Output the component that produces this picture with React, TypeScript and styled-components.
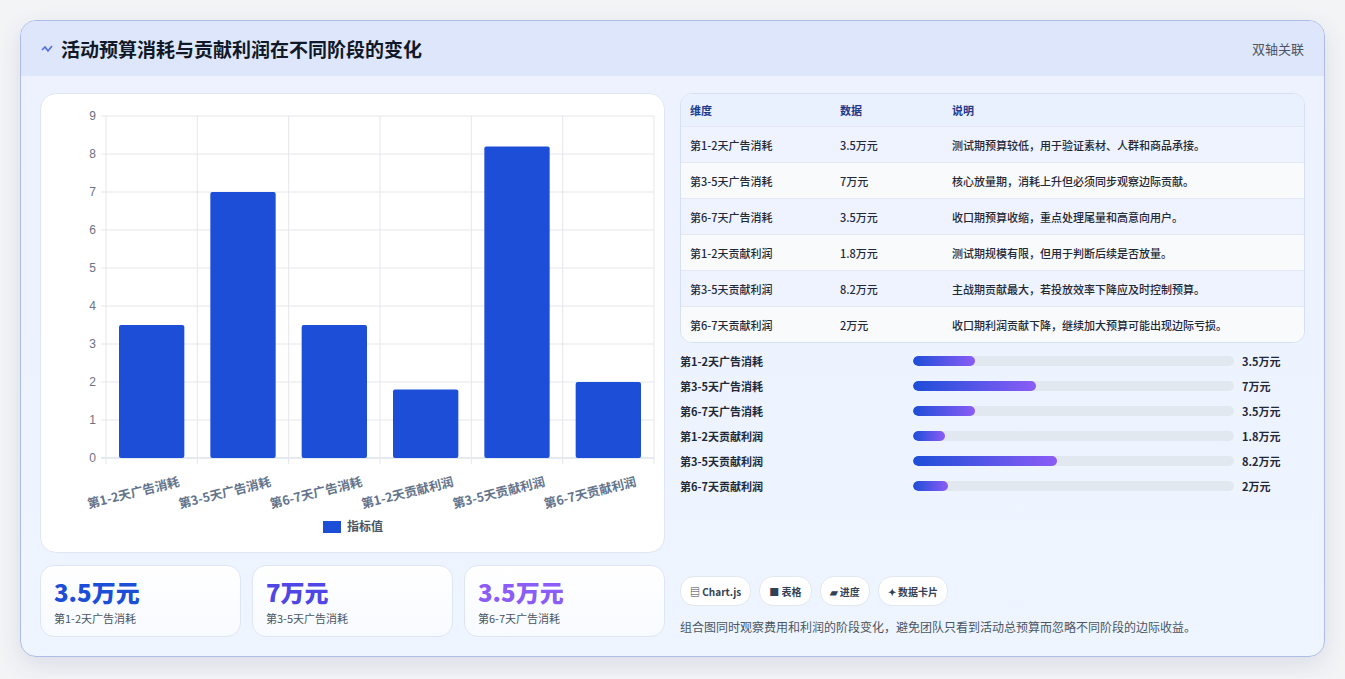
import React from "react";
import styled, { createGlobalStyle } from "styled-components";

const G = createGlobalStyle`
  body { margin:0; background:#f3f4f6; font-family: "Noto Sans CJK SC", "Noto Sans", sans-serif; }
`;
const Page = styled.div`padding:20px 20px 21px 20px;`;
const Card = styled.div`
  border:1px solid #aebde8; border-radius:16px; overflow:hidden;
  background:linear-gradient(180deg,#edf2fe,#eef5ff); box-shadow:0 8px 24px rgba(40,60,120,.12);
`;
const Header = styled.div`
  height:55px; background:#dde6fb; display:flex; align-items:center; justify-content:space-between; padding:0 20px;
`;
const Title = styled.div`font-size:19px; font-weight:700; color:#111827; display:flex; align-items:center; gap:8px;`;
const Tag = styled.div`font-size:13px; color:#4b5563;`;
const Body = styled.div`display:grid; grid-template-columns:625px 625px; gap:15px; padding:17px 19px 19px 19px;`;
const Col = styled.div`display:flex; flex-direction:column;`;
const ChartBox = styled.div`background:#fff; border:1px solid #dfe6f3; border-radius:16px; height:460px; box-sizing:border-box;`;
const Kpis = styled.div`display:grid; grid-template-columns:repeat(3,1fr); gap:11px; margin-top:12px;`;
const Kpi = styled.div`background:linear-gradient(180deg,#fff,#f7faff); border:1px solid #dfe6f3; border-radius:14px; height:72px; box-sizing:border-box; padding:10px 13px;`;
const KpiV = styled.div<{c:string}>`font-size:24px; font-weight:800; color:${p=>p.c}; line-height:32px;`;
const KpiL = styled.div`font-size:11px; color:#4b5563; margin-top:2px;`;
const Table = styled.div`border:1px solid #d6e0f0; border-radius:12px; overflow:hidden; background:#fff;`;
const Row = styled.div<{h?:boolean;alt?:boolean}>`
  display:grid; grid-template-columns:150px 112px 1fr; align-items:center; padding:0 9px;
  height:${p=>p.h?32:35}px; font-size:11px; color:#1f2937; font-weight:${p=>p.h?700:500};
  background:${p=>p.h?"#eaf1fe":p.alt?"#f8fafc":"#eef3ff"}; border-top:${p=>p.h?"none":"1px solid #e3e9f4"};
  ${p=>p.h?"color:#1e3a8a;":""}
`;
const Bars = styled.div`display:flex; flex-direction:column; gap:7px; margin-top:9px;`;
const BarRow = styled.div`display:grid; grid-template-columns:233px 321px 1fr; align-items:center; height:18px; font-size:11px; font-weight:700; color:#1f2937;`;
const Track = styled.div`height:10px; background:#e2e8f0; border-radius:5px; overflow:hidden;`;
const Fill = styled.div`height:100%; border-radius:5px; background:linear-gradient(90deg,#1d4ed8,#8b5cf6);`;
const Val = styled.div`padding-left:8px;`;
const Chips = styled.div`display:flex; gap:8px; margin-top:auto;`;
const Chip = styled.div`background:#fff; border:1px solid #e2e8f0; border-radius:14px; height:28px; padding:0 9px; display:flex; align-items:center; gap:3px; font-size:10px; font-weight:700; color:#334155;`;
const Note = styled.div`font-size:12px; color:#4b5563; margin-top:12px; margin-bottom:2px;`;

const cats=["第1-2天广告消耗","第3-5天广告消耗","第6-7天广告消耗","第1-2天贡献利润","第3-5天贡献利润","第6-7天贡献利润"];
const vals=[3.5,7,3.5,1.8,8.2,2];
const rows=[
 ["第1-2天广告消耗","3.5万元","测试期预算较低，用于验证素材、人群和商品承接。"],
 ["第3-5天广告消耗","7万元","核心放量期，消耗上升但必须同步观察边际贡献。"],
 ["第6-7天广告消耗","3.5万元","收口期预算收缩，重点处理尾量和高意向用户。"],
 ["第1-2天贡献利润","1.8万元","测试期规模有限，但用于判断后续是否放量。"],
 ["第3-5天贡献利润","8.2万元","主战期贡献最大，若投放效率下降应及时控制预算。"],
 ["第6-7天贡献利润","2万元","收口期利润贡献下降，继续加大预算可能出现边际亏损。"],
];

function Chart(){
  const x0=65,x1=613,y0=364,y9=22, u=(y0-y9)/9, w=(x1-x0)/6;
  return <svg width="625" height="460" style={{display:"block"}}>
    {Array.from({length:10},(_,i)=>{const y=y0-i*u;return <g key={i}>
      <line x1={x0-5} x2={x1} y1={y} y2={y} stroke={i===0?"#cbd5e1":"#e5e7eb"}/>
      <text x={x0-10} y={y+4} fontSize="12" fill="#6b7280" textAnchor="end" fontFamily="Liberation Sans">{i}</text></g>})}
    {Array.from({length:7},(_,i)=><line key={i} x1={x0+i*w} x2={x0+i*w} y1={y9} y2={y0+6} stroke="#e5e7eb"/>)}
    {vals.map((v,i)=><rect key={i} x={x0+i*w+13} y={y0-v*u} width={w-26} height={v*u} rx="2" fill="#1d4ed8"/>)}
    {cats.map((c,i)=><text key={c} transform={`translate(${x0+i*w+w-20},${y0+16}) rotate(-14)`} textAnchor="end" fontSize="12.5" fontWeight="700" fill="#64748b" dominantBaseline="hanging">{c}</text>)}
    <rect x="282" y="427" width="18" height="12" fill="#1d4ed8"/>
    <text x="306" y="437" fontSize="12" fontWeight="600" fill="#4b5563">指标值</text>
  </svg>;
}

export default function App(){
  return <><G/><Page><Card>
    <Header><Title><svg width="12" height="10" viewBox="0 0 12 10"><path d="M1 6l3-3 3 4 4-5" stroke="#4f6ee0" strokeWidth="1.6" fill="none"/></svg>活动预算消耗与贡献利润在不同阶段的变化</Title><Tag>双轴关联</Tag></Header>
    <Body>
      <Col>
        <ChartBox><Chart/></ChartBox>
        <Kpis>
          <Kpi><KpiV c="#1d4ed8">3.5万元</KpiV><KpiL>第1-2天广告消耗</KpiL></Kpi>
          <Kpi><KpiV c="#4f46e5">7万元</KpiV><KpiL>第3-5天广告消耗</KpiL></Kpi>
          <Kpi><KpiV c="#8b5cf6">3.5万元</KpiV><KpiL>第6-7天广告消耗</KpiL></Kpi>
        </Kpis>
      </Col>
      <Col>
        <Table>
          <Row h><span>维度</span><span>数据</span><span>说明</span></Row>
          {rows.map((r,i)=><Row key={i} alt={i%2===1}><span>{r[0]}</span><span>{r[1]}</span><span>{r[2]}</span></Row>)}
        </Table>
        <Bars>
          {rows.map((r,i)=><BarRow key={i}><span>{r[0]}</span><Track><Fill style={{width:`${vals[i]/8.2*45}%`}}/></Track><Val>{r[1]}</Val></BarRow>)}
        </Bars>
        <Chips>
          <Chip>▤ Chart.js</Chip><Chip>■ 表格</Chip><Chip>▰ 进度</Chip><Chip>✦ 数据卡片</Chip>
        </Chips>
        <Note>组合图同时观察费用和利润的阶段变化，避免团队只看到活动总预算而忽略不同阶段的边际收益。</Note>
      </Col>
    </Body>
  </Card></Page></>;
}
